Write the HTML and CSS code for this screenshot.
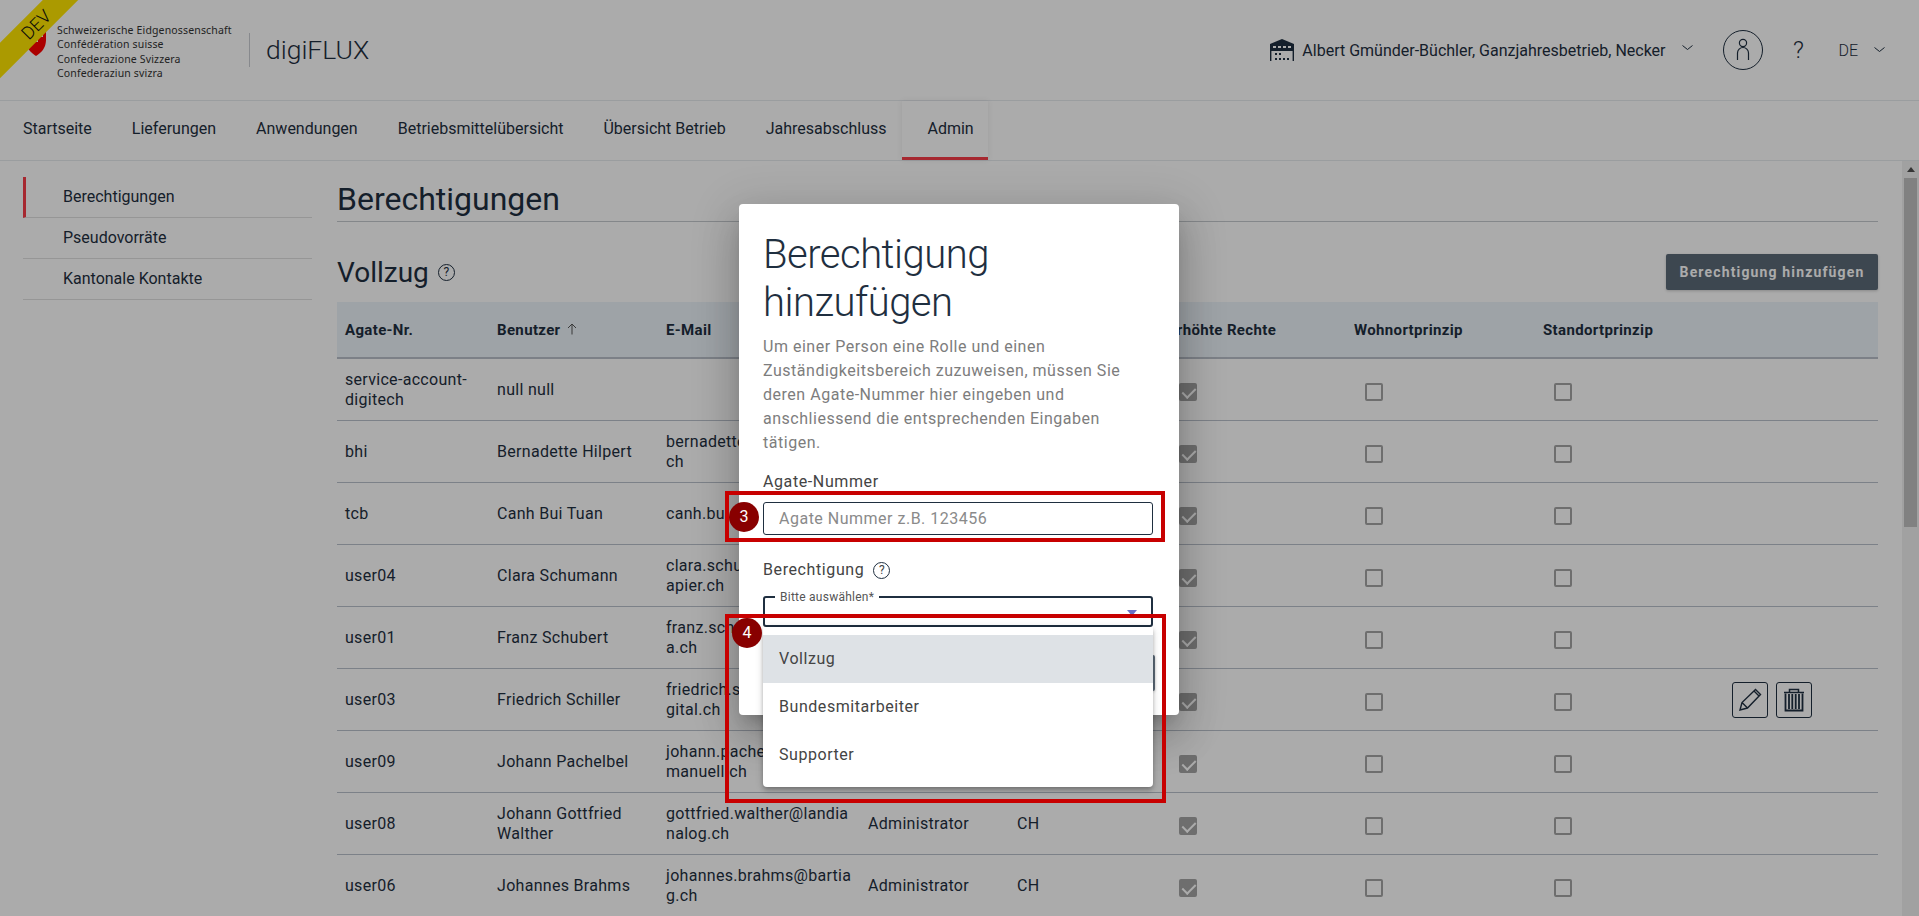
FILE: index.html
```html
<!DOCTYPE html>
<html lang="de">
<head>
  <meta charset="UTF-8">
  <title>digiFLUX</title>
  <link rel="stylesheet" href="styles.css">
</head>
<body>
  <div class="ribbon"><span>DEV</span></div>

  <header class="topbar">
    <div class="brand">
      <svg class="arms" width="20" height="38" viewBox="0 0 20 38">
        <path d="M0 1h20v20c0 8-5 13-10 16C5 34 0 29 0 21z" fill="#f00"/>
        <path d="M8 9h4v5h5v4h-5v5H8v-5H3v-4h5z" fill="#fff"/>
      </svg>
      <div class="confed">
        <div>Schweizerische Eidgenossenschaft</div>
        <div>Confédération suisse</div>
        <div>Confederazione Svizzera</div>
        <div>Confederaziun svizra</div>
      </div>
      <div class="app-name">digiFLUX</div>
    </div>
    <div class="user-area">
      <svg class="farm" width="24" height="22" viewBox="0 0 24 22">
        <path d="M12 0L24 5v7H0V5z" fill="#1f2f40"/>
        <path d="M3 7h3v2H3zM8 7h3v2H8zM13 7h3v2h-3zM18 7h3v2h-3z" fill="#fff"/>
        <path d="M0.7 12v10M23.3 12v10" stroke="#1f2f40" stroke-width="1.4"/>
        <path d="M5 14h2v2H5zM9 14h2v2H9zM5 19h2v2H5zM9 19h2v2H9zM13 19h2v2h-2zM17 19h2v2h-2z" fill="#1f2f40"/>
      </svg>
      <span class="company">Albert Gmünder-Büchler, Ganzjahresbetrieb, Necker</span>
      <svg class="chev chev-up" width="11" height="6" viewBox="0 0 11 6"><path d="M.5.5l5 4 5-4" fill="none" stroke="#1f2f40"/></svg>
      <svg class="avatar" width="40" height="40" viewBox="0 0 40 40">
        <circle cx="20" cy="20" r="19.5" fill="none" stroke="#1f2f40"/>
        <circle cx="20" cy="13" r="3.6" fill="none" stroke="#1f2f40" stroke-width="1.2"/>
        <path d="M14.5 30V23a5.5 5.5 0 0 1 11 0v7" fill="none" stroke="#1f2f40" stroke-width="1.2"/>
      </svg>
      <span class="help-mark">?</span>
      <span class="lang">DE</span>
      <svg class="chev" width="11" height="6" viewBox="0 0 11 6"><path d="M.5.5l5 4 5-4" fill="none" stroke="#1f2f40"/></svg>
    </div>
  </header>

  <nav class="tabs">
    <a class="tab">Startseite</a>
    <a class="tab">Lieferungen</a>
    <a class="tab">Anwendungen</a>
    <a class="tab">Betriebsmittelübersicht</a>
    <a class="tab">Übersicht Betrieb</a>
    <a class="tab">Jahresabschluss</a>
    <a class="tab active">Admin</a>
  </nav>

  <div class="content">
    <aside class="sidebar">
      <a class="side-item active">Berechtigungen</a>
      <a class="side-item">Pseudovorräte</a>
      <a class="side-item">Kantonale Kontakte</a>
    </aside>

    <main class="main">
      <h1 class="page-title">Berechtigungen</h1>
      <div class="section-head">
        <h2 class="section-title">Vollzug <span class="help small">?</span></h2>
        <button class="btn-primary">Berechtigung hinzufügen</button>
      </div>

      <table class="grid">
        <colgroup>
          <col class="c-agate"><col class="c-user"><col class="c-mail"><col class="c-role"><col class="c-area"><col class="c-flag"><col class="c-wohn"><col class="c-stand"><col class="c-act">
        </colgroup>
        <thead>
          <tr>
            <th>Agate-Nr.</th>
            <th>Benutzer <svg class="sort" width="10" height="12" viewBox="0 0 10 12"><path d="M5 11.5V1.5M1 5l4-4 4 4" fill="none" stroke="#555"/></svg></th>
            <th>E-Mail</th>
            <th></th>
            <th></th>
            <th>Erhöhte Rechte</th>
            <th>Wohnortprinzip</th>
            <th>Standortprinzip</th>
            <th></th>
          </tr>
        </thead>
        <tbody>
          <tr>
            <td>service-account-digitech</td><td>null null</td><td></td><td></td><td></td>
            <td><span class="check on"></span></td><td><span class="check"></span></td><td><span class="check"></span></td><td></td>
          </tr>
          <tr>
            <td>bhi</td><td>Bernadette Hilpert</td><td class="mail">bernadette.hilpert@bun.ch</td><td></td><td></td>
            <td><span class="check on"></span></td><td><span class="check"></span></td><td><span class="check"></span></td><td></td>
          </tr>
          <tr>
            <td>tcb</td><td>Canh Bui Tuan</td><td class="mail">canh.bui@digitech.ch</td><td></td><td></td>
            <td><span class="check on"></span></td><td><span class="check"></span></td><td><span class="check"></span></td><td></td>
          </tr>
          <tr>
            <td>user04</td><td>Clara Schumann</td><td class="mail">clara.schuman@klavierpapier.ch</td><td></td><td></td>
            <td><span class="check on"></span></td><td><span class="check"></span></td><td><span class="check"></span></td><td></td>
          </tr>
          <tr>
            <td>user01</td><td>Franz Schubert</td><td class="mail">franz.schubert@winterrea.ch</td><td></td><td></td>
            <td><span class="check on"></span></td><td><span class="check"></span></td><td><span class="check"></span></td><td></td>
          </tr>
          <tr>
            <td>user03</td><td>Friedrich Schiller</td><td class="mail">friedrich.schiller@dichtdigital.ch</td><td></td><td></td>
            <td><span class="check on"></span></td><td><span class="check"></span></td><td><span class="check"></span></td>
            <td class="actions">
              <button class="icon-btn">
                <svg width="34" height="34" viewBox="0 0 34 34"><path d="M7 27l2-7.5L22.500 6.500l5 5L14.500 25z M9 19.500l5.500 5.500 M21 8l5 5" fill="none" stroke="#1f2f40" stroke-width="1.4"/></svg>
              </button>
              <button class="icon-btn">
                <svg width="34" height="34" viewBox="0 0 34 34"><path d="M7 9.500h20M12.500 9V6.500h9V9" fill="none" stroke="#1f2f40" stroke-width="1.500"/><path d="M8.500 10.500v17h17v-17" fill="none" stroke="#1f2f40" stroke-width="1.800"/><path d="M12 11v15M15.300 11v15M18.700 11v15M22 11v15" stroke="#1f2f40" stroke-width="1.800"/></svg>
              </button>
            </td>
          </tr>
          <tr>
            <td>user09</td><td>Johann Pachelbel</td><td class="mail">johann.pachelbel@kanoemanuell.ch</td><td></td><td></td>
            <td><span class="check on"></span></td><td><span class="check"></span></td><td><span class="check"></span></td><td></td>
          </tr>
          <tr>
            <td>user08</td><td>Johann Gottfried Walther</td><td class="mail">gottfried.walther@landianalog.ch</td><td>Administrator</td><td>CH</td>
            <td><span class="check on"></span></td><td><span class="check"></span></td><td><span class="check"></span></td><td></td>
          </tr>
          <tr>
            <td>user06</td><td>Johannes Brahms</td><td class="mail">johannes.brahms@bartiag.ch</td><td>Administrator</td><td>CH</td>
            <td><span class="check on"></span></td><td><span class="check"></span></td><td><span class="check"></span></td><td></td>
          </tr>
        </tbody>
      </table>
    </main>

    <div class="scrollbar">
      <div class="scroll-arrow"></div>
      <div class="scroll-thumb"></div>
    </div>
  </div>

  <div class="backdrop"></div>

  <div class="modal">
    <h2 class="modal-title">Berechtigung hinzufügen</h2>
    <p class="modal-text">Um einer Person eine Rolle und einen Zuständigkeitsbereich zuzuweisen, müssen Sie deren Agate-Nummer hier eingeben und anschliessend die entsprechenden Eingaben tätigen.</p>
    <label class="field-label">Agate-Nummer</label>
    <input class="field-input" type="text" placeholder="Agate Nummer z.B. 123456">
    <div class="field-label perm-label">Berechtigung <span class="help">?</span></div>
    <div class="select">
      <span class="select-label">Bitte auswählen*</span>
      <span class="select-arrow"></span>
      <ul class="options">
        <li class="option current">Vollzug</li>
        <li class="option">Bundesmitarbeiter</li>
        <li class="option">Supporter</li>
      </ul>
    </div>
    <div class="modal-actions">
      <button class="btn-primary"></button>
    </div>
  </div>

  <div class="mark mark-3"></div>
  <div class="mark mark-4"></div>
  <div class="badge badge-3">3</div>
  <div class="badge badge-4">4</div>
</body>
</html>
```

FILE: styles.css
```css
* {
  box-sizing: border-box;
}
html, body {
  margin: 0;
  height: 916px;
  overflow: hidden;
}
body {
  position: relative;
  background: #fff;
  color: #1f2f40;
  font-family: Roboto, sans-serif;
  font-size: 16px;
}

/* header */
.ribbon {
  position: absolute;
  left: -39px;
  top: 17px;
  width: 140px;
  height: 25px;
  padding-left: 14px;
  background: #ffe600;
  transform: rotate(-45deg);
  text-align: center;
  z-index: 2;
  color: #111;
  font-size: 18px;
  font-weight: 300;
  line-height: 25px;
}
.topbar {
  height: 101px;
  border-bottom: 1px solid #e6eaee;
  display: flex;
  align-items: center;
  justify-content: space-between;
  padding: 0 34px 0 26px;
}
.brand {
  display: flex;
  align-items: center;
}
.arms {
  margin: 0 11px 24px 0;
}
.confed {
  width: 192px;
  padding-top: 3px;
  font-family: "Noto Sans", sans-serif;
  font-size: 10.5px;
  line-height: 14.3px;
  letter-spacing: .15px;
  color: #333;
}
.app-name {
  height: 34px;
  border-left: 1px solid #c9cdd2;
  padding-left: 16px;
  font-size: 26.5px;
  font-weight: 300;
  line-height: 34px;
}
.user-area {
  display: flex;
  align-items: center;
}
.company {
  margin-left: 8px;
}
.chev-up {
  margin: -4px 0 0 8px;
}
.avatar {
  margin-left: 30.2px;
}
.help-mark {
  margin-left: 30.2px;
  font-size: 24px;
  font-weight: 300;
}
.lang {
  margin-left: 34.6px;
  font-weight: 300;
}
.chev {
  margin-left: 16px;
}

/* tabs */
.tabs {
  height: 60px;
  border-bottom: 1px solid #e6eaee;
  display: flex;
  padding-left: 3px;
}
.tab {
  padding: 0 20px;
  line-height: 56px;
}
.tab.active {
  width: 86px;
  margin-left: -4px;
  padding: 0 0 0 25px;
  border-bottom: 3px solid #f83c48;
  box-shadow: 0 0 6px rgba(0, 0, 0, .08);
}

/* page */
.content {
  height: 755px;
  display: flex;
  padding-left: 23px;
}
.sidebar {
  width: 289px;
  padding-top: 16px;
}
.side-item {
  display: block;
  height: 41px;
  padding-left: 40px;
  border-bottom: 1px solid #e0e0e0;
  line-height: 40px;
}
.side-item.active {
  border-left: 3px solid #f83c48;
  padding-left: 37px;
}
.main {
  width: 1541px;
  margin-left: 25px;
}
.page-title {
  margin: 0;
  padding-top: 18px;
  height: 61px;
  border-bottom: 1px solid #c5c9ce;
  font-size: 32px;
  font-weight: 400;
  line-height: 40px;
}
.section-head {
  display: flex;
  align-items: center;
  justify-content: space-between;
  margin: 32px 0 12px;
}
.section-title {
  margin: 0;
  display: flex;
  align-items: center;
  gap: 9px;
  font-size: 28px;
  font-weight: 400;
}
.help {
  display: inline-block;
  width: 17px;
  height: 17px;
  border: 1px solid #1f2f40;
  border-radius: 50%;
  text-align: center;
  font-size: 12px;
  line-height: 15px;
}
.btn-primary {
  width: 212px;
  height: 36px;
  border: none;
  border-radius: 2px;
  background: #5c6a78;
  color: #fff;
  font-family: Roboto, sans-serif;
  font-size: 14px;
  font-weight: 700;
  letter-spacing: 1.15px;
  box-shadow: 0 1px 3px rgba(0, 0, 0, .2);
}

/* table */
.grid {
  width: 1541px;
  table-layout: fixed;
  border-collapse: separate;
  border-spacing: 0;
}
.c-agate { width: 152px; }
.c-user { width: 169px; }
.c-mail { width: 202px; }
.c-role { width: 149px; }
.c-area { width: 151px; }
.c-flag { width: 186px; }
.c-wohn { width: 189px; }
.c-stand { width: 189px; }
.c-act { width: 154px; }
.grid th {
  height: 57px;
  padding: 0 8px;
  background: #ecf3f9;
  border-bottom: 2px solid #b9bfc9;
  text-align: left;
  font-size: 15px;
  font-weight: 700;
  letter-spacing: .35px;
}
.sort {
  margin-left: 2px;
}
.grid td {
  height: 62px;
  padding: 0 8px;
  border-bottom: 1px solid #b9c1cb;
  line-height: 20px;
  letter-spacing: .3px;
}
.grid td.mail {
  word-break: break-all;
}
.check {
  display: block;
  position: relative;
  width: 18px;
  height: 18px;
  margin: 5px 0 0 11px;
  border: 2px solid #a4a4a4;
  border-radius: 2px;
}
.check.on {
  background: #a4a4a4;
}
.check.on::after {
  content: "";
  position: absolute;
  left: 4px;
  top: 0;
  width: 6px;
  height: 11px;
  border: solid #fff;
  border-width: 0 2px 2px 0;
  transform: rotate(45deg);
}
.actions {
  white-space: nowrap;
  font-size: 0;
}
.icon-btn {
  width: 36px;
  height: 36px;
  margin-right: 8px;
  padding: 0;
  border: 1px solid #1f2f40;
  border-radius: 3px;
  background: none;
  vertical-align: middle;
}
.icon-btn svg {
  display: block;
}

/* scrollbar */
.scrollbar {
  width: 17px;
  margin-left: 24px;
  background: #f1f1f1;
  padding: 6px 2px 0;
}
.scroll-arrow {
  width: 0;
  margin: 0 auto;
  border: solid transparent;
  border-width: 0 4px 5px;
  border-bottom-color: #505050;
}
.scroll-thumb {
  height: 349px;
  margin-top: 6px;
  background: #c1c1c1;
}

/* dialog */
.backdrop {
  position: absolute;
  inset: 0;
  background: rgba(0, 0, 0, .33);
  z-index: 3;
}
.modal {
  position: absolute;
  left: 739px;
  top: 204px;
  width: 440px;
  height: 511px;
  padding: 27px 24px 24px;
  background: #fff;
  border-radius: 4px;
  box-shadow: 0 11px 15px -7px rgba(0, 0, 0, .2), 0 24px 38px 3px rgba(0, 0, 0, .14), 0 9px 46px 8px rgba(0, 0, 0, .12);
  z-index: 4;
}
.modal-title {
  margin: 0 0 8px;
  font-size: 40px;
  font-weight: 300;
  line-height: 48px;
  letter-spacing: -.5px;
}
.modal-text {
  margin: 0 0 15px;
  color: #7d7d7d;
  line-height: 24px;
  letter-spacing: .52px;
}
.field-label {
  display: block;
  color: #444;
  line-height: 24px;
  letter-spacing: .6px;
}
.field-input {
  display: block;
  width: 390px;
  height: 33px;
  margin-top: 8px;
  padding: 0 15px;
  border: 1px solid #1f2f40;
  border-radius: 3px;
  font-family: Roboto, sans-serif;
  font-size: 16px;
  letter-spacing: .5px;
}
.field-input::placeholder {
  color: #8a8a8a;
  opacity: 1;
}
.perm-label {
  display: flex;
  align-items: center;
  gap: 9px;
  margin-top: 23px;
}
.perm-label .help {
  letter-spacing: 0;
}
.select {
  position: relative;
  width: 390px;
  height: 31px;
  margin-top: 14px;
  border: 2px solid #1f2f40;
  border-radius: 3px;
}
.select-label {
  position: absolute;
  left: 10px;
  top: -8px;
  padding: 0 5px;
  background: #fff;
  color: #555;
  font-size: 12px;
  line-height: 14px;
  letter-spacing: .25px;
}
.select-arrow {
  position: absolute;
  right: 14px;
  top: 12px;
  border: solid transparent;
  border-width: 6px 5px 0;
  border-top-color: #6a72c8;
}
.options {
  position: absolute;
  left: -2px;
  top: 29px;
  width: 390px;
  margin: 0;
  padding: 8px 0;
  list-style: none;
  background: #fff;
  border-radius: 0 0 4px 4px;
  box-shadow: 0 2px 4px -1px rgba(0, 0, 0, .2), 0 4px 5px rgba(0, 0, 0, .14), 0 1px 10px rgba(0, 0, 0, .12);
}
.option {
  height: 48px;
  padding-left: 16px;
  color: #444;
  line-height: 48px;
  letter-spacing: .55px;
}
.option.current {
  background: #dee2e6;
}
.modal-actions {
  display: flex;
  justify-content: flex-end;
  margin-top: 28px;
}

/* screenshot annotations */
.mark {
  position: absolute;
  border: 4px solid #c80000;
  z-index: 5;
}
.mark-3 {
  left: 725px;
  top: 491px;
  width: 440px;
  height: 51px;
}
.mark-4 {
  left: 725px;
  top: 614px;
  width: 441px;
  height: 189px;
}
.badge {
  position: absolute;
  width: 30px;
  height: 30px;
  border-radius: 50%;
  background: #880000;
  color: #fff;
  text-align: center;
  line-height: 30px;
  z-index: 6;
}
.badge-3 {
  left: 729px;
  top: 502px;
}
.badge-4 {
  left: 732px;
  top: 618px;
}
```
